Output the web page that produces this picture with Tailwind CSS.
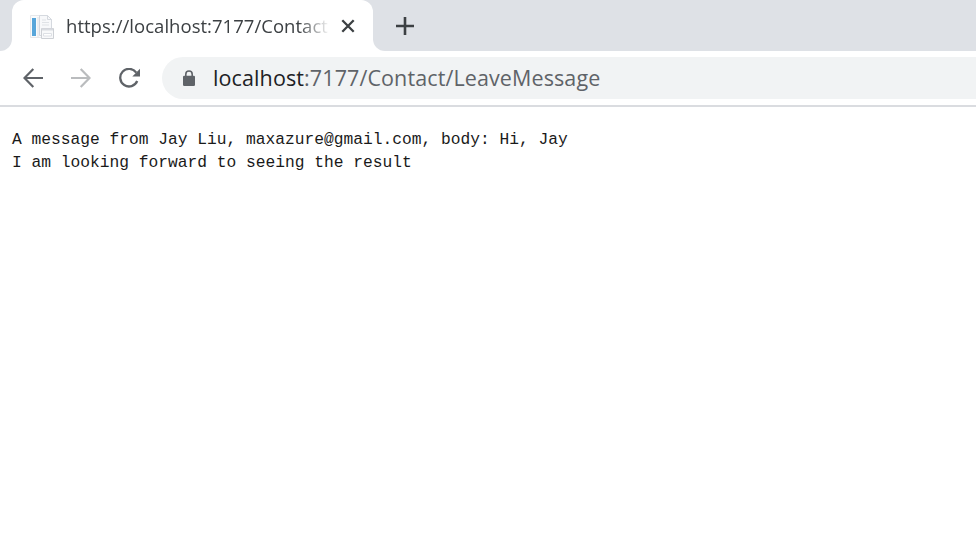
<!DOCTYPE html>
<html lang="en">
<head>
<meta charset="utf-8">
<title>https://localhost:7177/Contact/LeaveMessage</title>
<script src="https://cdn.jsdelivr.net/npm/@tailwindcss/browser@4"></script>
</head>
<body class="h-[538px] w-[976px] overflow-hidden bg-white font-['Open_Sans','Noto_Sans',sans-serif]">
<header>
  <div class="flex h-[51px] bg-white">
    <div class="w-3 shrink-0 rounded-br-[12px] bg-[#dee1e6]"></div>
    <div class="h-full w-[361px] shrink-0 bg-[#dee1e6]">
      <div class="flex h-full items-center rounded-t-[12px] bg-white pl-[18px]">
        <svg class="mt-0.5 h-6 w-6 shrink-0" viewBox="0 0 24 24" fill="none">
          <path d="M.5.5h17l4 4v18H.5z" fill="#fafbfc" stroke="#e6e8eb"/>
          <path d="M2 3h4v18H2z" fill="#58a6da"/>
          <path d="M8 2v20" stroke="#dfe2e6"/>
          <path d="M9.5.5h8l4 4v16h-12z" fill="#f7f8fa" stroke="#d5d9df"/>
          <path d="M17.5.5v4h4" stroke="#d5d9df"/>
          <path d="M12 5h4M12 7.5h7M12 10h7" stroke="#dfe2e6"/>
          <path d="M11.5 13.5h12v10h-12z" fill="#f8f9fa" stroke="#cdd0d5"/>
          <path d="M12 14.5h11" stroke="#d8dbe0" stroke-width="2"/>
          <path d="M13.5 18.5h8v2.5h-8z" fill="#fff" stroke="#dde0e5"/>
        </svg>
        <div class="ml-3 w-[264px] overflow-hidden whitespace-nowrap text-[18.5px] leading-6 tracking-[0.03px] text-[#3c4043] [mask-image:linear-gradient(to_right,black_88%,transparent)]">https://localhost:7177/Contact</div>
        <svg class="ml-2.5 h-4 w-4 shrink-0" viewBox="0 0 16 16" fill="none" stroke="#3c4043" stroke-width="2.3"><path d="M2.3 2.3l11.4 11.4M13.7 2.3L2.3 13.7"/></svg>
      </div>
    </div>
    <div class="flex flex-1 items-center rounded-bl-[12px] bg-[#dee1e6] pl-[23px]">
      <svg class="h-[18px] w-[18px]" viewBox="0 0 18 18" fill="none" stroke="#3c4043" stroke-width="2.6"><path d="M0 9h18M9 0v18"/></svg>
    </div>
  </div>
  <div class="flex h-14 items-center border-b-2 border-[#dadce0] pl-[23px]">
    <svg class="h-5 w-5 shrink-0" viewBox="0 0 20 20" fill="none" stroke="#5f6368" stroke-width="2.2"><path d="M20 10H2M10.3 1L1.5 10l8.8 9"/></svg>
    <svg class="ml-7 h-5 w-5 shrink-0" viewBox="0 0 20 20" fill="none" stroke="#babcbe" stroke-width="2.2"><path d="M0 10h18M9.7 1l8.8 9-8.8 9"/></svg>
    <svg class="ml-7 h-5 w-[21px] shrink-0" viewBox="0 0 21 20" fill="none" stroke="#5f6368" stroke-width="2.3"><path d="M17.3 4.7A8.8 8.8 0 1 0 18.2 13"/><path d="M21 .8v7.7h-7.7z" fill="#5f6368" stroke="none"/></svg>
    <div class="ml-[22px] flex h-[42px] flex-1 items-center rounded-l-full bg-[#f1f3f4] pl-[21px]">
      <svg class="h-4 w-3 shrink-0" viewBox="0 0 12 16"><path d="M2.8 7V4.2a3.2 3.2 0 0 1 6.4 0V7" fill="none" stroke="#5f6368" stroke-width="1.6"/><rect y="5.7" width="12" height="10.3" rx="1.3" fill="#5f6368"/></svg>
      <div class="ml-[18px] whitespace-nowrap text-[21.5px] leading-7 tracking-[0.11px] text-[#5f6368]"><span class="text-[#202124]">localhost</span>:7177/Contact/LeaveMessage</div>
    </div>
  </div>
</header>
<main>
  <pre class="pt-[21px] pl-3 font-['Liberation_Mono',monospace] text-[16.25px] leading-[23px] text-[#1a1a1a]">A message from Jay Liu, maxazure@gmail.com, body: Hi, Jay
I am looking forward to seeing the result</pre>
</main>
</body>
</html>
